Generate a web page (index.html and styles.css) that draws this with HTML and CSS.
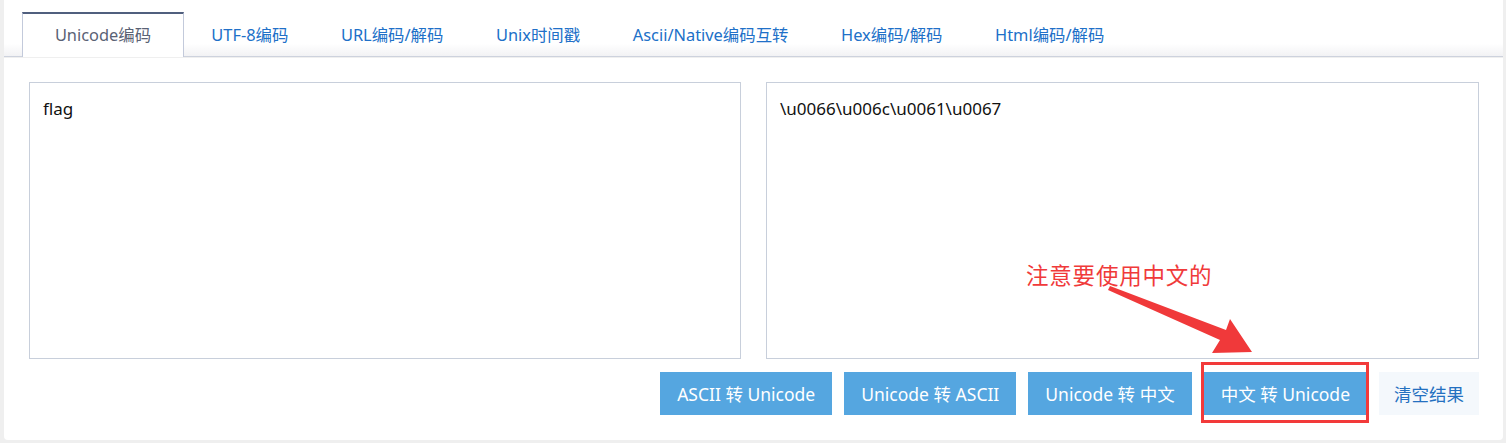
FILE: index.html
```html
<!DOCTYPE html>
<html lang="zh">
<head>
<meta charset="utf-8">
<title>Unicode编码</title>
<link rel="stylesheet" href="styles.css">
</head>
<body>
<div class="wrap">
  <div class="tabs">
    <a class="tab active">Unicode编码</a>
    <a class="tab">UTF-8编码</a>
    <a class="tab">URL编码/解码</a>
    <a class="tab">Unix时间戳</a>
    <a class="tab">Ascii/Native编码互转</a>
    <a class="tab">Hex编码/解码</a>
    <a class="tab">Html编码/解码</a>
  </div>
  <div class="panel">
    <div class="areas">
      <div class="area">flag</div>
      <div class="area">\u0066\u006c\u0061\u0067</div>
    </div>
    <div class="actions">
      <button class="btn">ASCII 转 Unicode</button>
      <button class="btn">Unicode 转 ASCII</button>
      <button class="btn">Unicode 转 中文</button>
      <button class="btn">中文 转 Unicode</button>
      <button class="btn light">清空结果</button>
    </div>
    <div class="note">注意要使用中文的</div>
    <svg class="arrow" width="160" height="80" viewBox="0 0 160 80">
      <polygon points="2,4 4,0 120,44 124,33 146,66 106,67 114,54" fill="#f0393a"/>
    </svg>
    <div class="mark"></div>
  </div>
</div>
</body>
</html>
```

FILE: styles.css
```css
html, body {
  margin: 0;
  padding: 0;
}
body {
  background: #efefef;
  font-family: "Noto Sans", "Noto Sans CJK SC", sans-serif;
  width: 1506px;
  height: 443px;
  overflow: hidden;
}
.wrap {
  margin-left: 4px;
  width: 1499px;
}
.tabs {
  display: flex;
  align-items: flex-end;
  height: 57px;
  background: linear-gradient(#ffffff 0%, #ffffff 78%, #f2f2f4 100%);
  border-bottom: 1px solid #cdd2dd;
  padding-left: 18px;
  box-sizing: border-box;
}
.tab {
  height: 43px;
  line-height: 44px;
  padding: 0 26.3px;
  font-size: 16.4px;
  color: #2070c8;
  box-sizing: border-box;
  white-space: nowrap;
}
.tab.active {
  width: 162px;
  text-align: center;
  padding: 0;
  color: #5a6275;
  background: #fff;
  border-top: 2px solid #505f7e;
  border-left: 1px solid #c3cadb;
  border-right: 1px solid #c3cadb;
  height: 45px;
  line-height: 42px;
  margin-bottom: -1px;
}
.tab.active + .tab {
  margin-left: 1px;
}
.panel {
  position: relative;
  margin-top: 1px;
  background: #fff;
  border-radius: 0 0 4px 4px;
  padding: 24px 24px 25px 25px;
  height: 382px;
  box-sizing: border-box;
}
.areas {
  display: grid;
  grid-template-columns: 712px 713px;
  column-gap: 25px;
}
.area {
  height: 277px;
  border: 1px solid #c8cfdb;
  box-sizing: border-box;
  padding: 14px 13px;
  font-size: 17px;
  line-height: 24px;
  color: #111;
}
.actions {
  display: flex;
  justify-content: flex-end;
  gap: 12px;
  margin-top: 13px;
}
.btn {
  height: 43px;
  border: 0;
  border-radius: 0;
  background: #55a6e0;
  color: #fff;
  font-family: "Noto Sans", "Noto Sans CJK SC", sans-serif;
  font-size: 17.5px;
  padding: 0 17px;
  white-space: nowrap;
}
.btn.light {
  background: #f4f8fc;
  color: #2470c0;
  width: 100px;
  padding: 0;
}
.note {
  position: absolute;
  left: 1022px;
  top: 200px;
  font-family: "Noto Sans CJK SC", sans-serif;
  font-size: 22.5px;
  color: #f03a3a;
  letter-spacing: 0.8px;
}
.arrow {
  position: absolute;
  left: 1102px;
  top: 228px;
}
.mark {
  position: absolute;
  left: 1197px;
  top: 304px;
  width: 168px;
  height: 61px;
  border: 3px solid #f23a3a;
  box-sizing: border-box;
}
```
